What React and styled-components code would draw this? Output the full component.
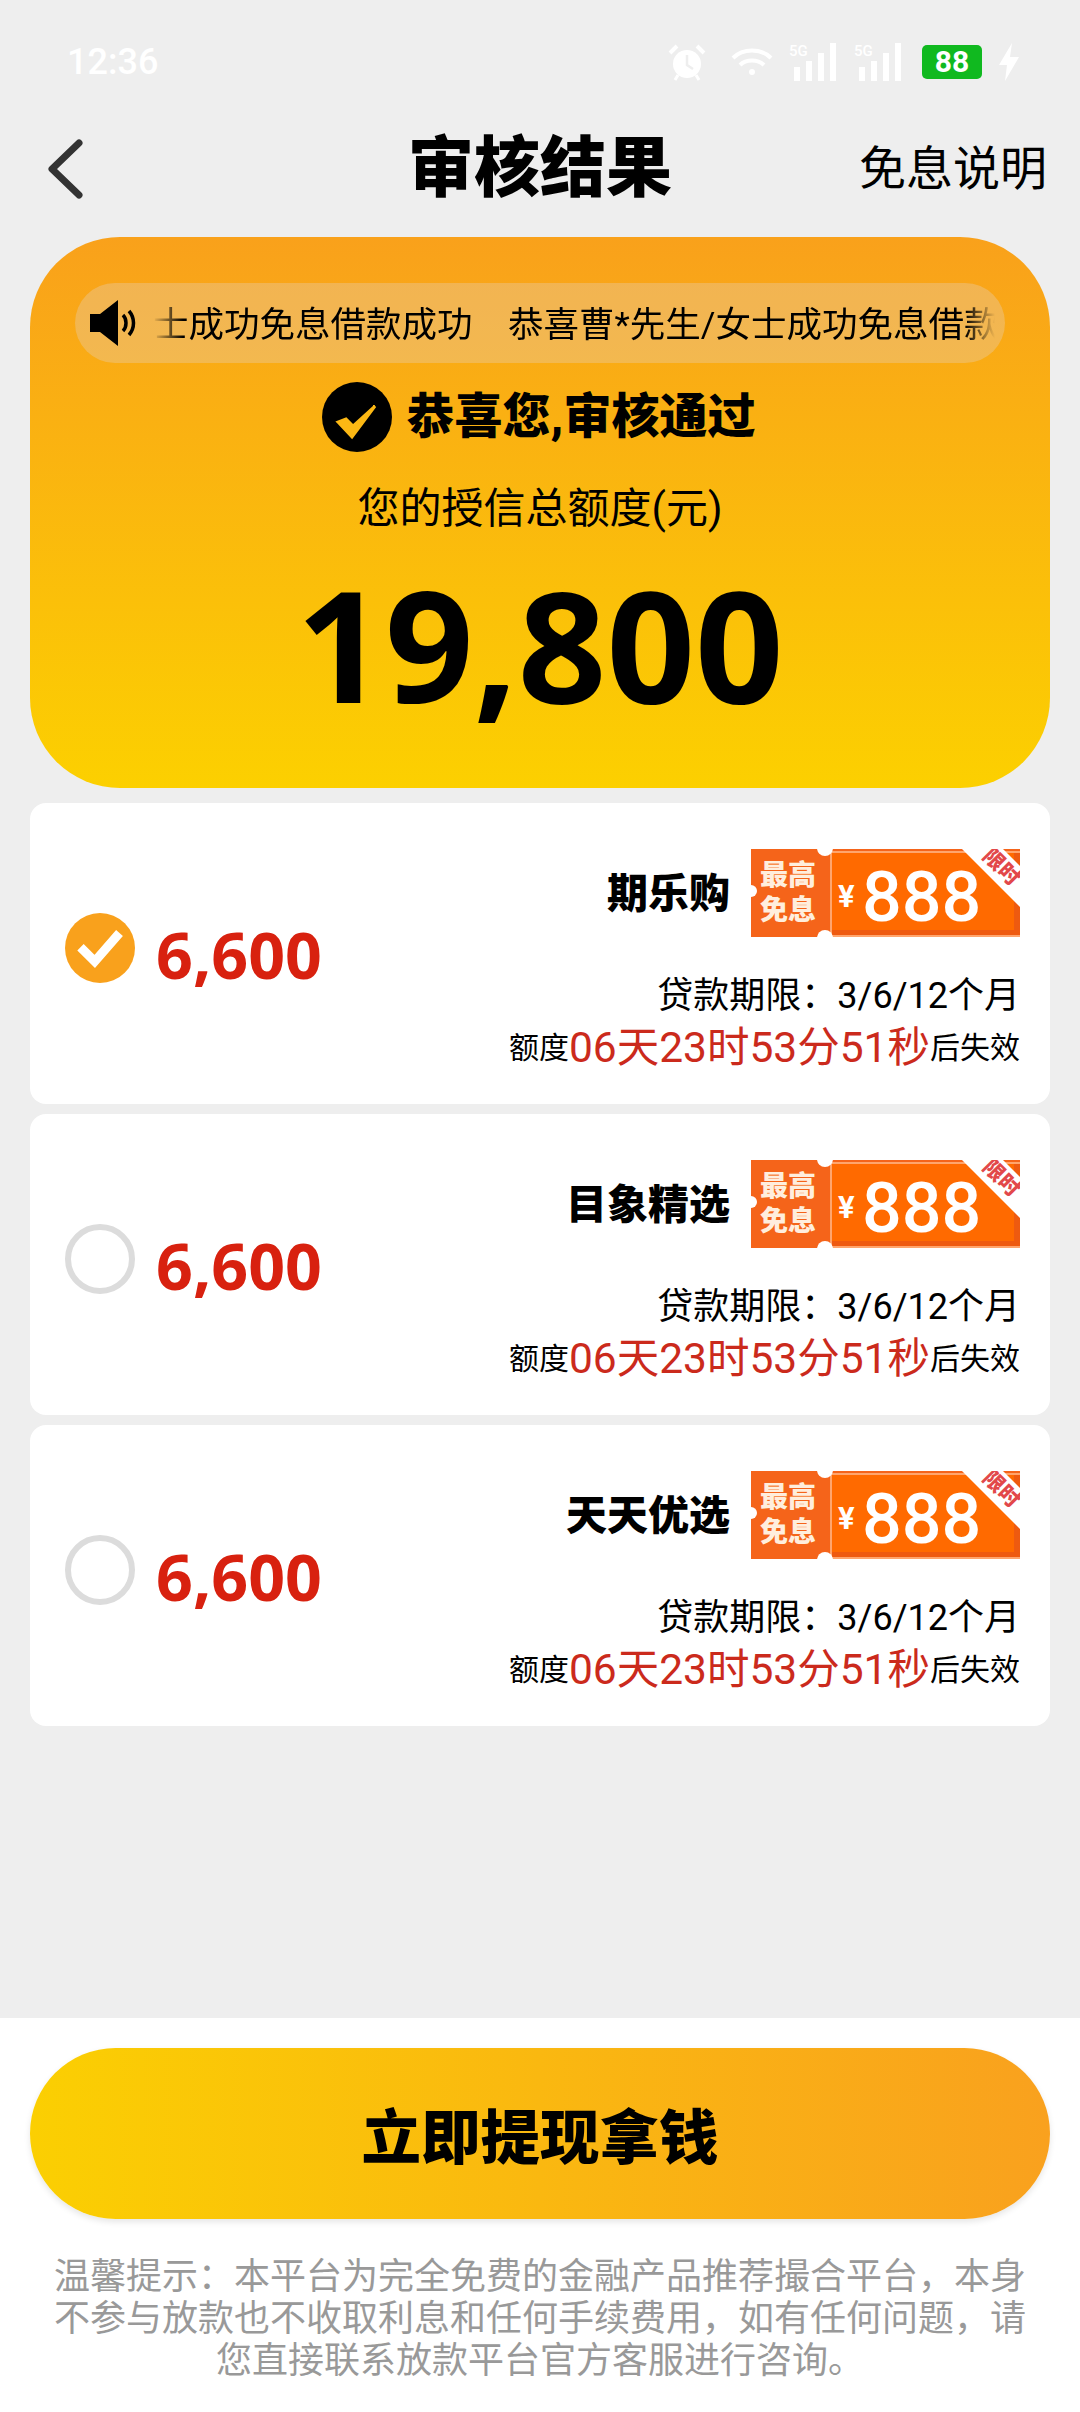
import React from 'react'
import styled, { createGlobalStyle } from 'styled-components'

const GlobalStyle = createGlobalStyle`
  html, body {
    margin: 0;
    padding: 0;
    background: #eeeeee;
  }
  * {
    box-sizing: border-box;
  }
`

const products = [
  { name: '期乐购', selected: true },
  { name: '目象精选', selected: false },
  { name: '天天优选', selected: false },
]

const Page = styled.div`
  width: 1080px;
  height: 2412px;
  display: flex;
  flex-direction: column;
  overflow: hidden;
  background: #eeeeee;
  color: #000;
  font-family: Roboto, 'Noto Sans CJK SC', sans-serif;
`

const StatusBar = styled.div`
  height: 100px;
  flex: none;
  display: flex;
  align-items: center;
  justify-content: space-between;
  padding: 24px 60px 0 67px;
  color: #fff;
`

const Time = styled.span`
  font-size: 36px;
  font-weight: 500;
`

const StatusIcons = styled.div`
  display: flex;
  align-items: center;
`

const Battery = styled.span`
  width: 60px;
  height: 34px;
  margin: 0 16px 0 16px;
  border-radius: 5px;
  background: #10b91f;
  color: #fff;
  font-size: 30px;
  font-weight: 700;
  line-height: 34px;
  text-align: center;
`

const Nav = styled.div`
  height: 137px;
  flex: none;
  display: grid;
  grid-template-columns: 1fr auto 1fr;
  align-items: center;
  padding: 0 33px;
`

const BackIcon = styled.svg`
  margin-left: 13px;
`

const Title = styled.h1`
  margin: 0;
  font-size: 66px;
  font-weight: 900;
  line-height: 1;
`

const NavLink = styled.span`
  justify-self: end;
  font-size: 47px;
  line-height: 1;
`

const Hero = styled.section`
  flex: none;
  height: 551px;
  margin: 0 30px;
  padding-top: 46px;
  border-radius: 90px;
  background: linear-gradient(180deg, #f9a11b 0%, #fcd000 100%);
  display: flex;
  flex-direction: column;
  align-items: center;
`

const Notice = styled.div`
  width: 930px;
  height: 80px;
  flex: none;
  display: flex;
  align-items: center;
  gap: 14px;
  padding: 0 10px 0 14px;
  border-radius: 40px;
  background: rgba(230, 210, 190, 0.35);
`

const NoticeText = styled.div`
  flex: 1;
  min-width: 0;
  padding-top: 5px;
  overflow: hidden;
  font-size: 35.5px;
  line-height: 1;
  white-space: pre;
  -webkit-mask-image: linear-gradient(90deg, transparent 0, #000 30px, #000 calc(100% - 30px), transparent 100%);
  mask-image: linear-gradient(90deg, transparent 0, #000 30px, #000 calc(100% - 30px), transparent 100%);
`

const Approved = styled.div`
  margin-top: 19px;
  margin-right: 3px;
  display: flex;
  align-items: center;
  gap: 15px;
  font-size: 48px;
  font-weight: 900;
  line-height: 70px;
`

const Sub = styled.div`
  margin-top: 32px;
  font-size: 42px;
  line-height: 50px;
`

const Total = styled.div`
  margin-top: 24px;
  font-family: 'Noto Sans', sans-serif;
  font-size: 155px;
  font-weight: 700;
  line-height: 170px;
`

const List = styled.div`
  margin: 15px 30px 0;
  display: flex;
  flex-direction: column;
  gap: 10px;
`

const Card = styled.article`
  height: 301px;
  display: flex;
  justify-content: space-between;
  padding: 46px 30px 0 35px;
  border-radius: 16px;
  background: #fff;
`

const Pick = styled.div`
  display: flex;
  align-items: center;
  gap: 22px;
  height: 198px;
`

const Radio = styled.span`
  width: 70px;
  height: 70px;
  flex: none;
  border-radius: 50%;
  display: flex;
  align-items: center;
  justify-content: center;
  background: ${(p) => (p.$on ? '#f9a11c' : '#fff')};
  border: ${(p) => (p.$on ? 'none' : '6px solid #dcdcdc')};
`

const Amount = styled.span`
  font-family: 'Noto Sans', sans-serif;
  font-size: 64.5px;
  font-weight: 700;
  line-height: 1;
  color: #d8210f;
  position: relative;
  top: 6px;
  left: -1px;
`

const Info = styled.div`
  display: flex;
  flex-direction: column;
  align-items: flex-end;
`

const TopRow = styled.div`
  display: flex;
  align-items: center;
  gap: 21px;
`

const Name = styled.span`
  font-size: 41px;
  font-weight: 900;
  line-height: 1;
  padding-top: 2px;
`

const Ticket = styled.div`
  position: relative;
  width: 269px;
  height: 88px;
  display: flex;
  overflow: hidden;
  background: #f5641a;
`

const TicketLeft = styled.div`
  width: 79px;
  flex: none;
  padding-left: 9px;
  display: flex;
  flex-direction: column;
  justify-content: center;
  color: #ffeedd;
  font-size: 28px;
  font-weight: 900;
  line-height: 35px;
`

const TicketPanel = styled.div`
  flex: 1;
  margin: 2px 0 0;
  border: 2px solid #ffa56d;
  border-right: none;
  padding: 0 0 0 6px;
  display: flex;
  align-items: center;
  background: #ff6a00;
  box-shadow: inset -6px -5px 0 #ee5a10;
  color: #fff;
`

const Yen = styled.span`
  width: 24px;
  font-size: 31px;
  font-weight: 700;
  padding-top: 4px;
`

const Big = styled.span`
  font-size: 70px;
  font-weight: 500;
  line-height: 1;
  padding-top: 5px;
`

const Notch = styled.i`
  position: absolute;
  width: ${(p) => p.$size}px;
  height: ${(p) => p.$size}px;
  left: ${(p) => p.$x}px;
  top: ${(p) => p.$y}px;
  border-radius: 50%;
  background: #fff;
`

const Ribbon = styled.span`
  position: absolute;
  left: 200px;
  top: 4px;
  width: 100px;
  height: 29px;
  background: #fff;
  color: #e2484a;
  font-size: 21px;
  font-weight: 900;
  line-height: 29px;
  text-align: center;
  transform: rotate(45deg);
`

const Term = styled.div`
  margin-top: 39px;
  font-size: 36px;
  line-height: 40px;
`

const Expire = styled.div`
  margin-top: 7px;
  display: flex;
  align-items: center;
  font-size: 30px;
  line-height: 50px;
`

const Countdown = styled.span`
  font-size: 42.5px;
  color: #cb2a1c;
`

const Footer = styled.footer`
  margin-top: auto;
  height: 394px;
  flex: none;
  padding: 30px 30px 0;
  background: #fff;
`

const Submit = styled.button`
  display: block;
  width: 100%;
  height: 171px;
  padding: 0 0 2px;
  border: none;
  border-radius: 86px;
  background: linear-gradient(90deg, #fbcf02 0%, #f9a11e 100%);
  box-shadow: 0 3px 6px rgba(0, 0, 0, 0.1);
  color: #000;
  font-family: inherit;
  font-size: 59.5px;
  font-weight: 900;
`

const Tip = styled.p`
  margin: 37px 20px 0;
  color: #999999;
  font-size: 36px;
  line-height: 42px;
  text-align: center;
`

const Check = ({ color, size, width }) => (
  <svg width={size} height={size} viewBox="0 0 40 40" fill="none">
    <path d="M7 19.5 L16.5 29 L33 10" stroke={color} strokeWidth={width} />
  </svg>
)

const Signal = () => (
  <svg width="52" height="38" viewBox="0 0 52 38" fill="#fff">
    <text x="0" y="13" fontSize="15" fontFamily="Roboto" fontWeight="500">5G</text>
    <rect x="5" y="24" width="6" height="14" />
    <rect x="17" y="18" width="6" height="20" />
    <rect x="29" y="10" width="6" height="28" />
    <rect x="41" y="0" width="6" height="38" />
  </svg>
)

const StatusRow = () => (
  <StatusIcons>
    <svg width="38" height="38" viewBox="0 0 38 38" fill="none" style={{ marginRight: 25 }}>
      <circle cx="19" cy="21" r="14" fill="#fff" />
      <path d="M2 10 L9 3 M36 10 L29 3" stroke="#fff" strokeWidth="4" />
      <path d="M10 32 L7 37 M28 32 L31 37" stroke="#fff" strokeWidth="3" />
      <path d="M19 12 V22 L25 26" stroke="#eee" strokeWidth="2.5" />
    </svg>
    <svg width="42" height="30" viewBox="0 0 42 30" fill="none" stroke="#fff" strokeWidth="4" style={{ marginRight: 16 }}>
      <path d="M2 11 C12 1 30 1 40 11" />
      <path d="M9 18 C15 12 27 12 33 18" />
      <circle cx="21" cy="25" r="3" fill="#fff" stroke="none" />
    </svg>
    <Signal />
    <span style={{ width: 13 }} />
    <Signal />
    <Battery>88</Battery>
    <svg width="22" height="38" viewBox="0 0 22 38" fill="#fff">
      <path d="M14 0 L1 22 H9 L7 38 L21 14 H12 Z" />
    </svg>
  </StatusIcons>
)

const Product = ({ name, selected }) => (
  <Card>
    <Pick>
      <Radio $on={selected}>
        {selected && <Check color="#fff" size={60} width={6} />}
      </Radio>
      <Amount>6,600</Amount>
    </Pick>
    <Info>
      <TopRow>
        <Name>{name}</Name>
        <Ticket>
          <TicketLeft>
            <span>最高</span>
            <span>免息</span>
          </TicketLeft>
          <TicketPanel>
            <Yen>¥</Yen>
            <Big>888</Big>
          </TicketPanel>
          <Notch $size={16} $x={66} $y={-9} />
          <Notch $size={16} $x={66} $y={81} />
          <Notch $size={12} $x={-6} $y={36} />
          <Ribbon>限时</Ribbon>
        </Ticket>
      </TopRow>
      <Term>贷款期限：3/6/12个月</Term>
      <Expire>
        额度<Countdown>06天23时53分51秒</Countdown>后失效
      </Expire>
    </Info>
  </Card>
)

export default function App() {
  return (
    <Page>
      <GlobalStyle />
      <StatusBar>
        <Time>12:36</Time>
        <StatusRow />
      </StatusBar>
      <Nav>
        <BackIcon width="40" height="60" viewBox="0 0 40 60" fill="none">
          <path d="M33 4 L6 30 L33 56" stroke="#333" strokeWidth="7" strokeLinecap="round" strokeLinejoin="round" />
        </BackIcon>
        <Title>审核结果</Title>
        <NavLink>免息说明</NavLink>
      </Nav>
      <Hero>
        <Notice>
          <svg width="50" height="50" viewBox="0 0 50 50" fill="none">
            <path d="M1 16 H11 L29 2 V48 L11 34 H1 Z" fill="#000" />
            <path d="M34 17 C38 21 38 29 34 33" stroke="#000" strokeWidth="3.5" />
            <path d="M40 13 C46 20 46 30 40 37" stroke="#000" strokeWidth="3.5" />
          </svg>
          <NoticeText>士成功免息借款成功　恭喜曹*先生/女士成功免息借款</NoticeText>
        </Notice>
        <Approved>
          <svg width="70" height="70" viewBox="0 0 70 70">
            <circle cx="35" cy="35" r="35" fill="#000" />
            <path d="M16 40 L30 55 L53 24 L31 44 L24 37 Z" fill="#fcb814" stroke="#fcb814" strokeWidth="3" />
          </svg>
          恭喜您,审核通过
        </Approved>
        <Sub>您的授信总额度(元)</Sub>
        <Total>19,800</Total>
      </Hero>
      <List>
        {products.map((item) => (
          <Product key={item.name} {...item} />
        ))}
      </List>
      <Footer>
        <Submit>立即提现拿钱</Submit>
        <Tip>温馨提示：本平台为完全免费的金融产品推荐撮合平台，本身不参与放款也不收取利息和任何手续费用，如有任何问题，请您直接联系放款平台官方客服进行咨询。</Tip>
      </Footer>
    </Page>
  )
}
